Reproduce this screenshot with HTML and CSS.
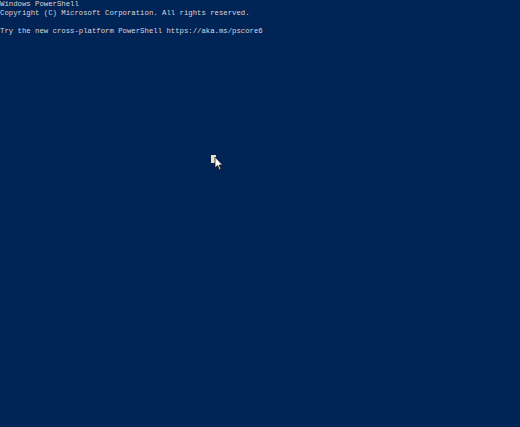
FILE: index.html
```html
<!DOCTYPE html>
<html lang="en">
<head>
    <meta charset="UTF-8">
    <title>Windows PowerShell</title>
    <link rel="stylesheet" href="styles.css">
</head>
<body>
    <!-- console output -->
    <div class="console">
        <div class="line">Windows PowerShell</div>
        <div class="line">Copyright (C) Microsoft Corporation. All rights reserved.</div>
        <div class="line">&nbsp;</div>
        <div class="line">Try the new cross-platform PowerShell https://aka.ms/pscore6</div>
    </div>

    <!-- mouse pointer over the console -->
    <svg class="pointer" width="14" height="18" viewBox="0 0 14 18">
        <rect x="0" y="0" width="5" height="8" fill="#e8e0c0"/>
        <path d="M4 2 L4 13 L6.5 10.5 L8.5 15 L10 14.3 L8 10 L11.5 10 Z" fill="#ffffff" stroke="#1a1a1a" stroke-width="0.8"/>
    </svg>
</body>
</html>
```

FILE: styles.css
```css
* {
    margin: 0;
    padding: 0;
    box-sizing: border-box;
}

html, body {
    width: 100%;
    height: 100%;
}

body {
    background-color: #012456;
    overflow: hidden;
    position: relative;
}

/* console text */
.console {
    font-family: 'Liberation Mono', 'DejaVu Sans Mono', monospace;
    font-size: 7.3px;
    line-height: 9px;
    color: #d6d6dc;
}

.line {
    white-space: pre;
}

/* cursor */
.pointer {
    position: absolute;
    left: 211px;
    top: 155px;
}
```
